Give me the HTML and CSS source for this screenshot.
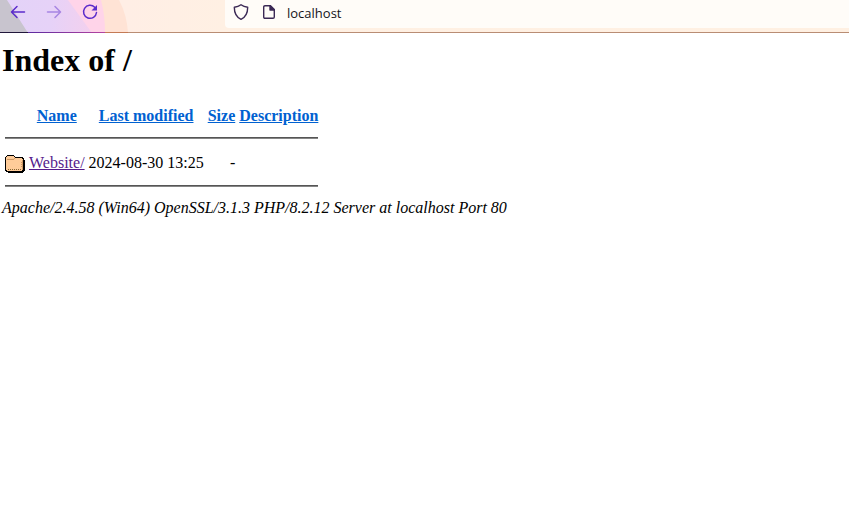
FILE: index.html
```html
<!DOCTYPE html>
<html lang="en">
<head>
<meta charset="utf-8">
<title>Index of /</title>
<link rel="stylesheet" href="styles.css">
</head>
<body>
<header class="toolbar">
  <svg class="theme" width="240" height="33" viewBox="0 0 240 33" aria-hidden="true">
    <defs>
      <linearGradient id="violet" x1="0" x2="1" y1="0" y2="0"><stop offset="0" stop-color="#e3d3f8"/><stop offset=".55" stop-color="#e6d2f8"/><stop offset="1" stop-color="#f3d0ee"/></linearGradient>
      <linearGradient id="edge" x1="0" x2="1" y1="0" y2="0"><stop offset="0" stop-color="#5b2aa0"/><stop offset="1" stop-color="#b544a0"/></linearGradient>
    </defs>
    <path fill="#ffe3d5" d="M0 0H119Q127 15 128 33H0Z"/>
    <path fill="#ffd4e9" d="M0 0H101Q105 15 105 33H0Z"/>
    <path fill="url(#violet)" d="M0 0H68L92 33H0Z"/>
    <path fill="#c8c4ce" d="M0 0H7L28 33H0Z"/>
    <path fill="#21173b" d="M0 32H28V33H0Z"/>
    <path fill="url(#edge)" d="M28 32H105V33H28Z"/>
    <path fill="#c47a55" d="M105 32H128V33H105Z"/>
    <path fill="#b98d74" d="M128 32H240V33H128Z"/>
  </svg>
  <nav class="buttons">
    <svg class="icon" width="16" height="16" viewBox="0 0 16 16"><path d="M14.500 8H2M7 2.500L1.500 8L7 13.500"/></svg>
    <svg class="icon disabled" width="16" height="16" viewBox="0 0 16 16"><path d="M1.500 8H14M9 2.500L14.500 8L9 13.500"/></svg>
    <svg class="icon" width="16" height="16" viewBox="0 0 16 16"><path d="M12.700 3.300A6.500 6.500 0 1 0 14.500 8.500"/><path class="solid" d="M15 1V6.500H9.500Z"/></svg>
  </nav>
  <div class="address-bar">
    <svg class="site-icon" width="16" height="18" viewBox="0 0 16 18"><path d="M8 1.700C6 3.300 3.800 4 1.300 4.200C1.300 10 3 14 8 16.300C13 14 14.700 10 14.700 4.200C12.200 4 10 3.300 8 1.700Z"/></svg>
    <svg class="site-icon page" width="12" height="14" viewBox="0 0 12 14"><path d="M2 .7H7.500L11.300 4.500V12Q11.300 13.300 10 13.300H2Q.7 13.300.7 12V2Q.7.7 2 .7Z"/><path class="fold" d="M7 .7V5H11.300Z"/></svg>
    <span class="url">localhost</span>
  </div>
</header>
<main class="listing">
  <h1>Index of /</h1>
  <table>
    <tr><th class="icon-cell"></th><th><a href="#">Name</a></th><th><a href="#">Last modified</a></th><th><a href="#">Size</a></th><th><a href="#">Description</a></th></tr>
    <tr><th colspan="5"><hr></th></tr>
    <tr class="entry">
      <td class="icon-cell"><svg class="folder" width="20" height="22" viewBox="0 0 20 22" shape-rendering="crispEdges">
        <path fill="#000" d="M2 4H9V5H10V6H18V7H19V9H20V20H19V21H18V22H3V21H1V20H0V6H1V5H2Z"/>
        <path fill="#fc9" d="M2 5H9V6H10V7H17V8H18V19H17V20H2V19H1V6H2Z"/>
        <path fill="#c96" d="M2 8H9V9H2ZM9 7H10V8H9ZM17 9H18V19H17ZM16 11H17V12H16ZM16 13H17V14H16ZM16 15H17V16H16Z"/>
        <path fill="#863" d="M3 18H4V19H3ZM5 18H6V19H5ZM7 18H8V19H7ZM9 18H10V19H9ZM11 18H12V19H11ZM13 18H14V19H13ZM15 18H16V19H15Z"/>
      </svg></td>
      <td><a class="visited" href="#">Website/</a></td><td class="number">2024-08-30 13:25</td><td class="number">-</td><td>&nbsp;</td>
    </tr>
    <tr><th colspan="5"><hr></th></tr>
  </table>
  <address>Apache/2.4.58 (Win64) OpenSSL/3.1.3 PHP/8.2.12 Server at localhost Port 80</address>
</main>
</body>
</html>
```

FILE: styles.css
```css
body {
  margin: 0;
  background: #fff;
  color: #000;
  font: 16px "Liberation Serif", "Times New Roman", serif;
}
.toolbar {
  position: relative;
  display: flex;
  box-sizing: border-box;
  height: 33px;
  background: linear-gradient(90deg, #ffeee5 128px, #fff0e3 225px, #fff0e2);
  border-bottom: 1px solid #b98d74;
}
.theme {
  position: absolute;
  top: 0;
  left: 0;
}
.buttons {
  position: relative;
  display: flex;
  gap: 20px;
  width: 215px;
  padding: 4px 0 0 10px;
}
.icon {
  fill: none;
  stroke: #5b2bcb;
  stroke-width: 1.5;
  stroke-linecap: round;
  stroke-linejoin: round;
}
.icon .solid {
  fill: #5b2bcb;
  stroke: none;
}
.disabled {
  opacity: .45;
}
.address-bar {
  position: relative;
  display: flex;
  flex: 1;
  height: 28px;
  padding-left: 8px;
  background: #fffcf8;
  border-bottom-left-radius: 4px;
}
.site-icon {
  margin-top: 3px;
  fill: none;
  stroke: #3b2955;
  stroke-width: 1.4;
  stroke-linejoin: round;
}
.page {
  margin: 5px 12px 0 14px;
}
.fold {
  fill: #3b2955;
}
.url {
  color: #15141a;
  font: 13px/18px "Open Sans", "Noto Sans", sans-serif;
  margin-top: 4px;
}
.listing {
  padding: 9px 2px 0;
}
h1 {
  margin: 0 0 24px;
  font-size: 32px;
  line-height: 37px;
}
table {
  border-spacing: 2px;
}
th,
td {
  padding: 1px;
  line-height: 18px;
  white-space: nowrap;
}
th a {
  position: relative;
  top: 1px;
}
.entry td:not(.icon-cell) {
  padding-top: 3px;
}
.icon-cell {
  width: 20px;
}
.number {
  text-align: right;
}
.folder {
  display: block;
}
a {
  color: #0061d1;
}
.visited {
  color: #551a8b;
}
hr {
  height: 2px;
  margin: 9px 0 8px;
  border: 0;
  background: linear-gradient(#555 50%, #858585 50%);
}
.entry + tr hr {
  margin-top: 8px;
}
address {
  padding-top: 1px;
  line-height: 18px;
}
```
